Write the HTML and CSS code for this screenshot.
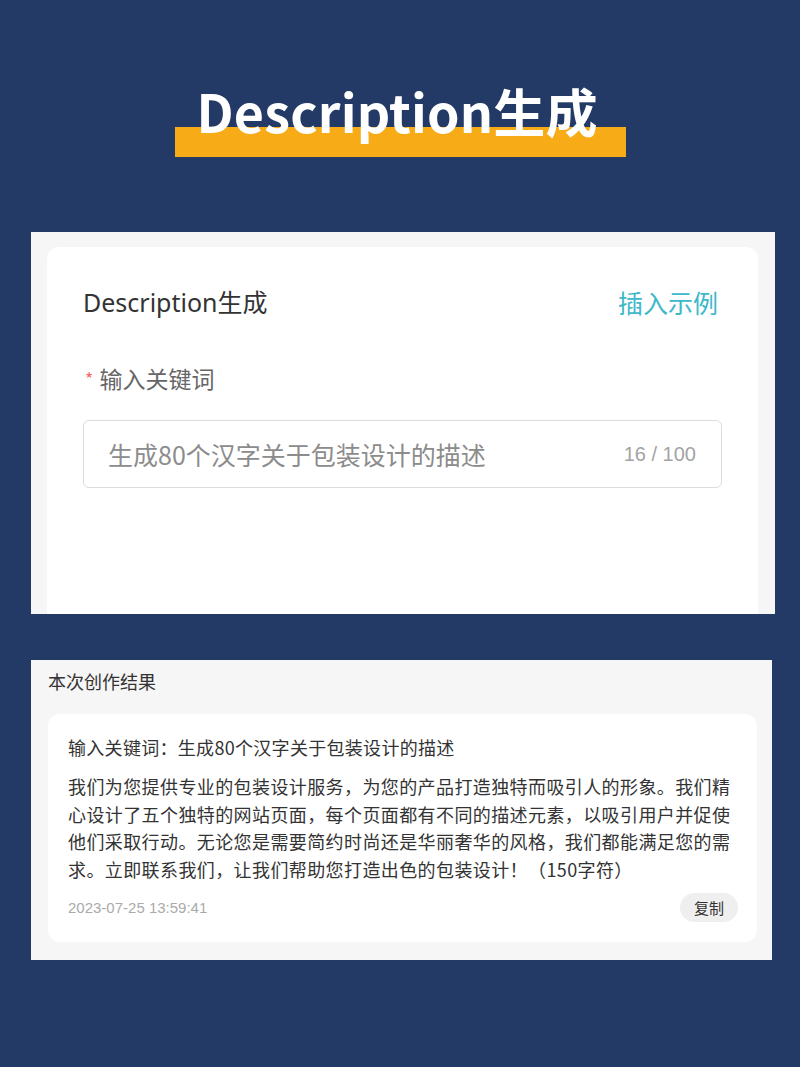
FILE: index.html
```html
<!DOCTYPE html>
<html lang="zh-CN">
<head>
<meta charset="utf-8">
<title>Description生成</title>
<link rel="stylesheet" href="styles.css">
</head>
<body>
<header class="hero">
  <h1 class="hero-title">Description生成</h1>
</header>

<section class="panel panel-form">
  <div class="card form-card">
    <div class="form-head">
      <h2 class="form-title">Description生成</h2>
      <a class="insert-link">插入示例</a>
    </div>
    <div class="field-label"><span class="req">*</span>输入关键词</div>
    <div class="input-box">
      <span class="input-text">生成80个汉字关于包装设计的描述</span>
      <span class="counter">16 / 100</span>
    </div>
  </div>
</section>

<section class="panel panel-result">
  <div class="result-title">本次创作结果</div>
  <div class="card result-card">
    <div class="result-keyword">输入关键词：生成80个汉字关于包装设计的描述</div>
    <p class="result-text">我们为您提供专业的包装设计服务，为您的产品打造独特而吸引人的形象。我们精<br>心设计了五个独特的网站页面，每个页面都有不同的描述元素，以吸引用户并促使<br>他们采取行动。无论您是需要简约时尚还是华丽奢华的风格，我们都能满足您的需<br>求。立即联系我们，让我们帮助您打造出色的包装设计！（150字符）</p>
    <div class="result-foot">
      <span class="timestamp">2023-07-25 13:59:41</span>
      <button class="copy-btn">复制</button>
    </div>
  </div>
</section>
</body>
</html>
```

FILE: styles.css
```css
* { box-sizing: border-box; }
html, body { margin: 0; padding: 0; }
body {
  background: #243a66;
  font-family: "Noto Sans", "Noto Sans CJK SC", sans-serif;
  color: #333;
  width: 800px;
  height: 1067px;
  overflow: hidden;
}

.hero {
  display: flex;
  justify-content: center;
  padding-top: 72px;
  height: 232px;
}
.hero-title {
  margin: 0;
  padding: 0 32px 8px 22px;
  width: 451px;
  text-align: center;
  font-family: "Noto Sans CJK SC", sans-serif;
  font-weight: 700;
  font-size: 52px;
  line-height: 77px;
  letter-spacing: 0.2px;
  color: #fff;
  background: linear-gradient(#f7ac17, #f7ac17) left bottom / 100% 30px no-repeat;
  height: 85px;
  white-space: nowrap;
}

.panel {
  background: #f6f6f6;
  margin-left: 31px;
}
.card { background: #fff; }

.panel-form {
  width: 744px;
  height: 382px;
  padding: 15px 17px 0 16px;
}
.form-card {
  height: 367px;
  border-radius: 12px 12px 0 0;
  padding: 40px 36px 0;
}
.form-head {
  display: flex;
  justify-content: space-between;
  align-items: center;
  height: 30px;
}
.form-title {
  margin: 0;
  font-weight: 400;
  font-size: 25px;
  line-height: 30px;
  color: #333;
}
.insert-link {
  font-family: "Noto Sans CJK SC", sans-serif;
  font-size: 25px;
  line-height: 30px;
  color: #3db8c9;
  margin-right: 4px;
}
.field-label {
  margin-top: 46px;
  font-family: "Noto Sans CJK SC", sans-serif;
  font-size: 23px;
  line-height: 30px;
  color: #666;
  display: flex;
  align-items: center;
}
.req {
  color: #f56c6c;
  font-size: 18px;
  margin: 0 6px 0 2px;
}
.input-box {
  margin-top: 27px;
  height: 68px;
  border: 1px solid #dcdcdc;
  border-radius: 6px;
  display: flex;
  align-items: center;
  justify-content: space-between;
  padding: 0 25px 0 24px;
}
.input-text {
  font-family: "Noto Sans CJK SC", sans-serif;
  font-size: 25px;
  color: #8c8c8c;
}
.counter {
  font-family: "Liberation Sans", sans-serif;
  font-size: 20px;
  color: #a3a3a3;
}

.panel-result {
  margin-top: 46px;
  width: 741px;
  height: 300px;
  padding: 0 15px 18px 17px;
}
.result-title {
  height: 54px;
  padding-top: 8px;
  font-family: "Noto Sans CJK SC", sans-serif;
  font-size: 18px;
  line-height: 26px;
  color: #333;
}
.result-card {
  height: 228px;
  border-radius: 12px;
  padding: 19px 19px 0 20px;
  font-family: "Noto Sans CJK SC", sans-serif;
}
.result-keyword {
  font-size: 18px;
  line-height: 28px;
  color: #333;
  letter-spacing: 0.3px;
}
.result-text {
  margin: 12px 0 0;
  font-size: 18px;
  line-height: 27.7px;
  color: #333;
  white-space: nowrap;
  letter-spacing: 0.4px;
}
.result-foot {
  margin-top: 9px;
  display: flex;
  justify-content: space-between;
  align-items: center;
}
.timestamp {
  font-family: "Liberation Sans", sans-serif;
  font-size: 15px;
  color: #aaa;
}
.copy-btn {
  border: 0;
  background: #efefef;
  border-radius: 15px;
  width: 58px;
  height: 29px;
  padding: 0;
  font-family: "Noto Sans CJK SC", sans-serif;
  font-size: 15px;
  color: #333;
}
```
